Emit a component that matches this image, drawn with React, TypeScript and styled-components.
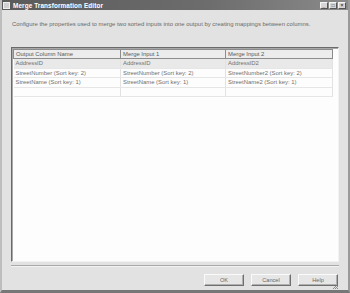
import React from 'react';
import styled, { createGlobalStyle } from 'styled-components';

const GlobalStyle = createGlobalStyle`
	html, body {
		margin: 0;
		padding: 0;
		background: #d9d9d9;
	}
	* {
		box-sizing: border-box;
	}
`;

const Window = styled.div`
	width: 350px;
	height: 293px;
	display: flex;
	flex-direction: column;
	background: #e2e2e2;
	border-left: 2px solid #bdbdbd;
	border-right: 2px solid #9a9a9a;
	border-bottom: 3px solid #777;
	font-family: 'Liberation Sans', Arial, sans-serif;
	color: #555;
`;

const TitleBar = styled.div`
	height: 10px;
	display: flex;
	align-items: center;
	padding: 0 2px 0 1px;
	background: linear-gradient(to right, #5a5a5a, #6d6d6d 60%, #8a8a8a);
`;

const AppIcon = styled.div`
	width: 7px;
	height: 7px;
	margin-right: 3px;
	background: #d0d0d0;
	border: 1px solid #eee;
`;

const Title = styled.span`
	flex: 1;
	color: #fff;
	font-size: 6.4px;
	font-weight: bold;
	letter-spacing: 0.1px;
`;

const CaptionButtons = styled.div`
	display: flex;
	gap: 1px;
`;

const CaptionButton = styled.div`
	width: 8px;
	height: 7px;
	display: flex;
	align-items: center;
	justify-content: center;
	background: #d6d6d6;
	border: 1px solid;
	border-color: #f4f4f4 #555 #555 #f4f4f4;
	font-size: 5px;
	font-weight: bold;
	line-height: 1;
	color: #333;
`;

const Body = styled.div`
	flex: 1;
	display: flex;
	flex-direction: column;
	padding: 11px 9px 0 9px;
`;

const Description = styled.p`
	margin: 0 0 0 1px;
	font-size: 5.95px;
	line-height: 7px;
	color: #6a6a6a;
	white-space: nowrap;
`;

const GridFrame = styled.div`
	margin-top: 19px;
	height: 215px;
	background: #fdfdfd;
	border: 1px solid;
	border-color: #6a6a6a #f2f2f2 #f2f2f2 #6a6a6a;
	box-shadow: inset 1px 1px 0 #a8a8a8;
	padding: 1px;
`;

const Table = styled.table`
	border-collapse: collapse;
	table-layout: fixed;
	width: 319px;
	font-size: 5.9px;
`;

const HeaderCell = styled.th`
	height: 9px;
	padding: 0 0 0 2px;
	text-align: left;
	font-weight: normal;
	color: #5a5a5a;
	background: #ececec;
	border: 1px solid #8c8c8c;
	white-space: nowrap;
`;

const Row = styled.tr<{ $shaded?: boolean }>`
	background: ${({ $shaded }) => ($shaded ? '#e9e9e9' : '#fdfdfd')};
`;

const Cell = styled.td`
	height: 9.5px;
	padding: 0 0 0 2px;
	color: #707070;
	border-right: 1px solid #e2e2e2;
	border-bottom: 1px solid #e6e6e6;
	white-space: nowrap;
	overflow: hidden;
`;

const Separator = styled.div`
	margin-top: 3px;
	height: 2px;
	border-top: 1px solid #a9a9a9;
	border-bottom: 1px solid #f2f2f2;
`;

const ButtonRow = styled.div`
	display: flex;
	justify-content: flex-end;
	gap: 7px;
	padding: 7px 1px 0 0;
`;

const Button = styled.div`
	width: 40px;
	height: 12px;
	display: flex;
	align-items: center;
	justify-content: center;
	font-size: 5.6px;
	color: #666;
	background: #e6e6e6;
	border: 1px solid;
	border-color: #fafafa #6f6f6f #6f6f6f #fafafa;
	box-shadow: inset -1px -1px 0 #b0b0b0;
`;

const Grip = styled.svg`
	position: absolute;
	right: 0;
	bottom: 0;
`;

const Footer = styled.div`
	position: relative;
	flex: 1;
`;

const rows = [
	['AddressID', 'AddressID', 'AddressID2'],
	['StreetNumber (Sort key: 2)', 'StreetNumber (Sort key: 2)', 'StreetNumber2 (Sort key: 2)'],
	['StreetName (Sort key: 1)', 'StreetName (Sort key: 1)', 'StreetName2 (Sort key: 1)'],
	['', '', ''],
];

const App: React.FC = () => {
	return (
		<>
			<GlobalStyle />
			<Window>
				<TitleBar>
					<AppIcon />
					<Title>Merge Transformation Editor</Title>
					<CaptionButtons>
						<CaptionButton>_</CaptionButton>
						<CaptionButton>□</CaptionButton>
						<CaptionButton>×</CaptionButton>
					</CaptionButtons>
				</TitleBar>
				<Body>
					<Description>
						Configure the properties used to merge two sorted inputs into one output by creating mappings between columns.
					</Description>
					<GridFrame>
						<Table>
							<colgroup>
								<col style={{ width: 107 }} />
								<col style={{ width: 105 }} />
								<col style={{ width: 107 }} />
							</colgroup>
							<thead>
								<tr>
									<HeaderCell>Output Column Name</HeaderCell>
									<HeaderCell>Merge Input 1</HeaderCell>
									<HeaderCell>Merge Input 2</HeaderCell>
								</tr>
							</thead>
							<tbody>
								{rows.map((r, i) => (
									<Row key={i} $shaded={i === 0}>
										{r.map((c, j) => (
											<Cell key={j}>{c}</Cell>
										))}
									</Row>
								))}
							</tbody>
						</Table>
					</GridFrame>
					<Separator />
					<Footer>
						<ButtonRow>
							<Button>OK</Button>
							<Button>Cancel</Button>
							<Button>Help</Button>
						</ButtonRow>
						<Grip width="7" height="7" viewBox="0 0 7 7">
							<path d="M6 1L1 6M6 3L3 6M6 5L5 6" stroke="#777" strokeWidth="0.8" />
						</Grip>
					</Footer>
				</Body>
			</Window>
		</>
	);
};

export default App;
